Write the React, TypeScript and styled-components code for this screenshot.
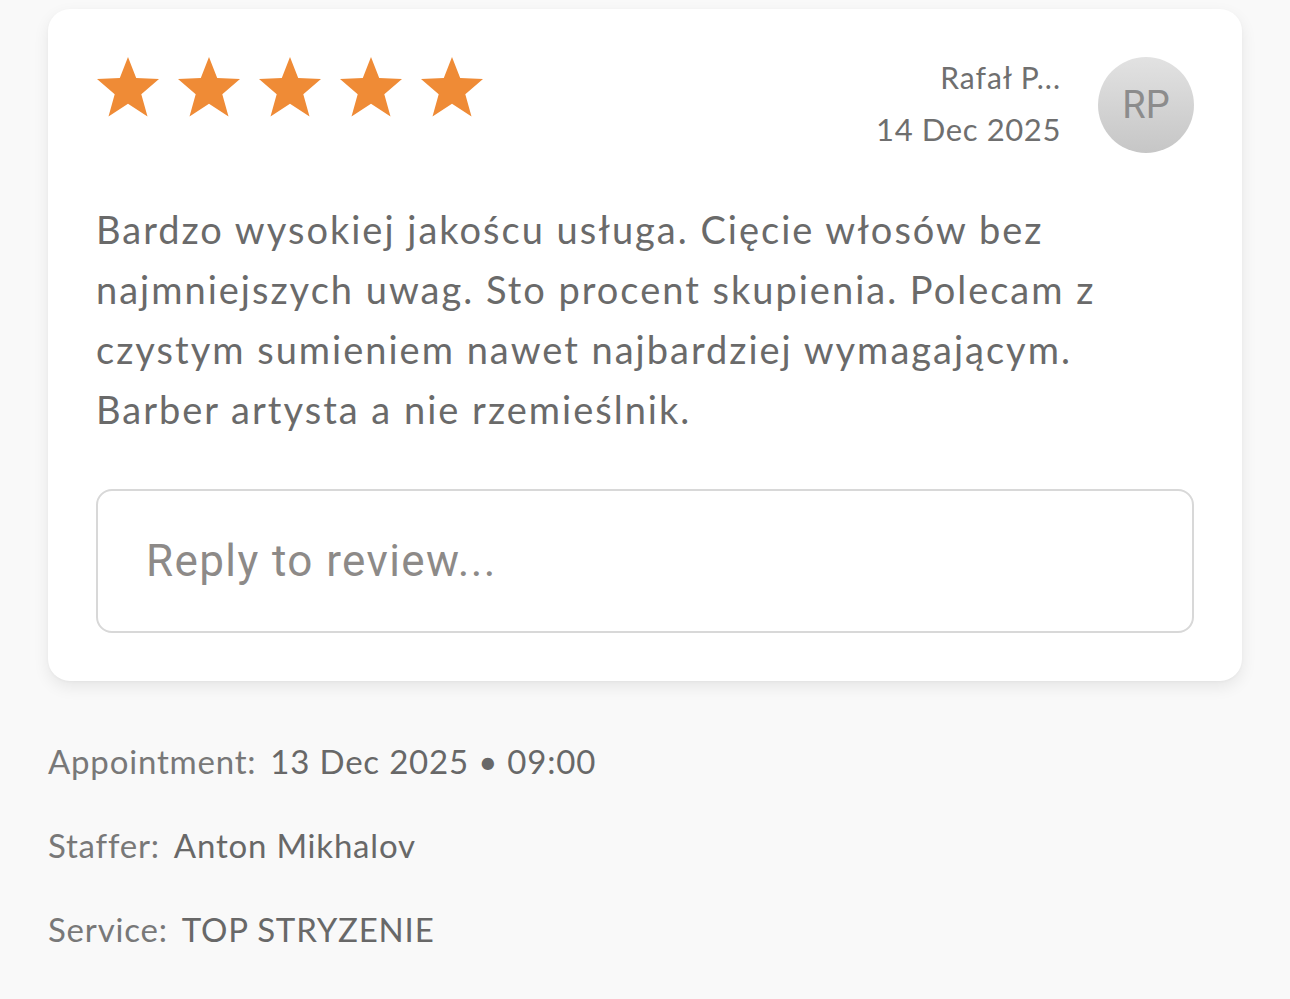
import React from "react";
import styled, { createGlobalStyle } from "styled-components";

const Global = createGlobalStyle`
  html, body { margin: 0; padding: 0; background: #f9f9f9; }
  body { font-family: Lato, "Open Sans", sans-serif; -webkit-font-smoothing: antialiased; }
`;

const Page = styled.div`
  padding: 9px 48px 0 48px;
  width: 1194px;
  box-sizing: content-box;
`;

const Card = styled.div`
  background: #fff;
  border-radius: 22px;
  box-shadow: 0 6px 16px rgba(0, 0, 0, 0.08), 0 1px 3px rgba(0, 0, 0, 0.03);
  padding: 48px;
  display: flex;
  flex-direction: column;
`;

const Header = styled.div`
  display: flex;
  justify-content: space-between;
  align-items: flex-start;
`;

const Stars = styled.div`
  display: flex;
  gap: 17px;
`;

const Author = styled.div`
  display: flex;
  align-items: flex-start;
  gap: 37px;
`;

const AuthorText = styled.div`
  display: flex;
  flex-direction: column;
  align-items: flex-end;
  color: #6f6f6f;
  padding-top: 3px;
`;

const Name = styled.div`
  font-size: 30px;
  line-height: 34px;
  letter-spacing: 1px;
`;

const DateText = styled.div`
  font-size: 31px;
  line-height: 38px;
  letter-spacing: 0.6px;
  margin-top: 16px;
`;

const Avatar = styled.div`
  width: 96px;
  height: 96px;
  border-radius: 50%;
  background: linear-gradient(180deg, #e2e2e2 0%, #c6c6c6 100%);
  display: flex;
  align-items: center;
  justify-content: center;
  color: #8c8c8c;
  font-family: Roboto, sans-serif;
  font-size: 38px;
`;

const Body = styled.p`
  margin: 46px 0 0 0;
  color: #6a6a6a;
  font-size: 38px;
  line-height: 60px;
  letter-spacing: 2px;
`;

const Reply = styled.div`
  margin-top: 50px;
  height: 144px;
  box-sizing: border-box;
  border: 2px solid #d8d8d8;
  border-radius: 16px;
  display: flex;
  align-items: center;
  padding: 0 48px;
  color: #8d8a88;
  font-family: Roboto, sans-serif;
  font-size: 44px;
  letter-spacing: 1.4px;
`;

const Meta = styled.div`
  display: flex;
  flex-direction: column;
  gap: 42px;
  margin-top: 59px;
`;

const MetaRow = styled.div`
  display: flex;
  gap: 14px;
  font-size: 33px;
  line-height: 42px;
  letter-spacing: 0.8px;
`;

const Label = styled.span`
  color: #787878;
`;

const Value = styled.span`
  color: #686868;
`;

const Star = () => (
  <svg width="64" height="60" viewBox="0 0 64 60">
    <polygon
      fill="#ef8b36"
      points="32,0 40.2,21 63,22 45.3,37.2 51.5,59.5 32,46.8 12.5,59.5 18.7,37.2 1,22 23.8,21"
    />
  </svg>
);

export default function App() {
  return (
    <>
      <Global />
      <Page>
        <Card>
          <Header>
            <Stars>
              {[0, 1, 2, 3, 4].map((i) => (
                <Star key={i} />
              ))}
            </Stars>
            <Author>
              <AuthorText>
                <Name>Rafał P...</Name>
                <DateText>14 Dec 2025</DateText>
              </AuthorText>
              <Avatar>RP</Avatar>
            </Author>
          </Header>
          <Body>
            Bardzo wysokiej jakoścu usługa. Cięcie włosów bez
            <br />
            najmniejszych uwag. Sto procent skupienia. Polecam z
            <br />
            czystym sumieniem nawet najbardziej wymagającym.
            <br />
            Barber artysta a nie rzemieślnik.
          </Body>
          <Reply>Reply to review...</Reply>
        </Card>
        <Meta>
          <MetaRow>
            <Label>Appointment:</Label>
            <Value>13 Dec 2025 • 09:00</Value>
          </MetaRow>
          <MetaRow>
            <Label>Staffer:</Label>
            <Value>Anton Mikhalov</Value>
          </MetaRow>
          <MetaRow>
            <Label>Service:</Label>
            <Value>TOP STRYZENIE</Value>
          </MetaRow>
        </Meta>
      </Page>
    </>
  );
}
